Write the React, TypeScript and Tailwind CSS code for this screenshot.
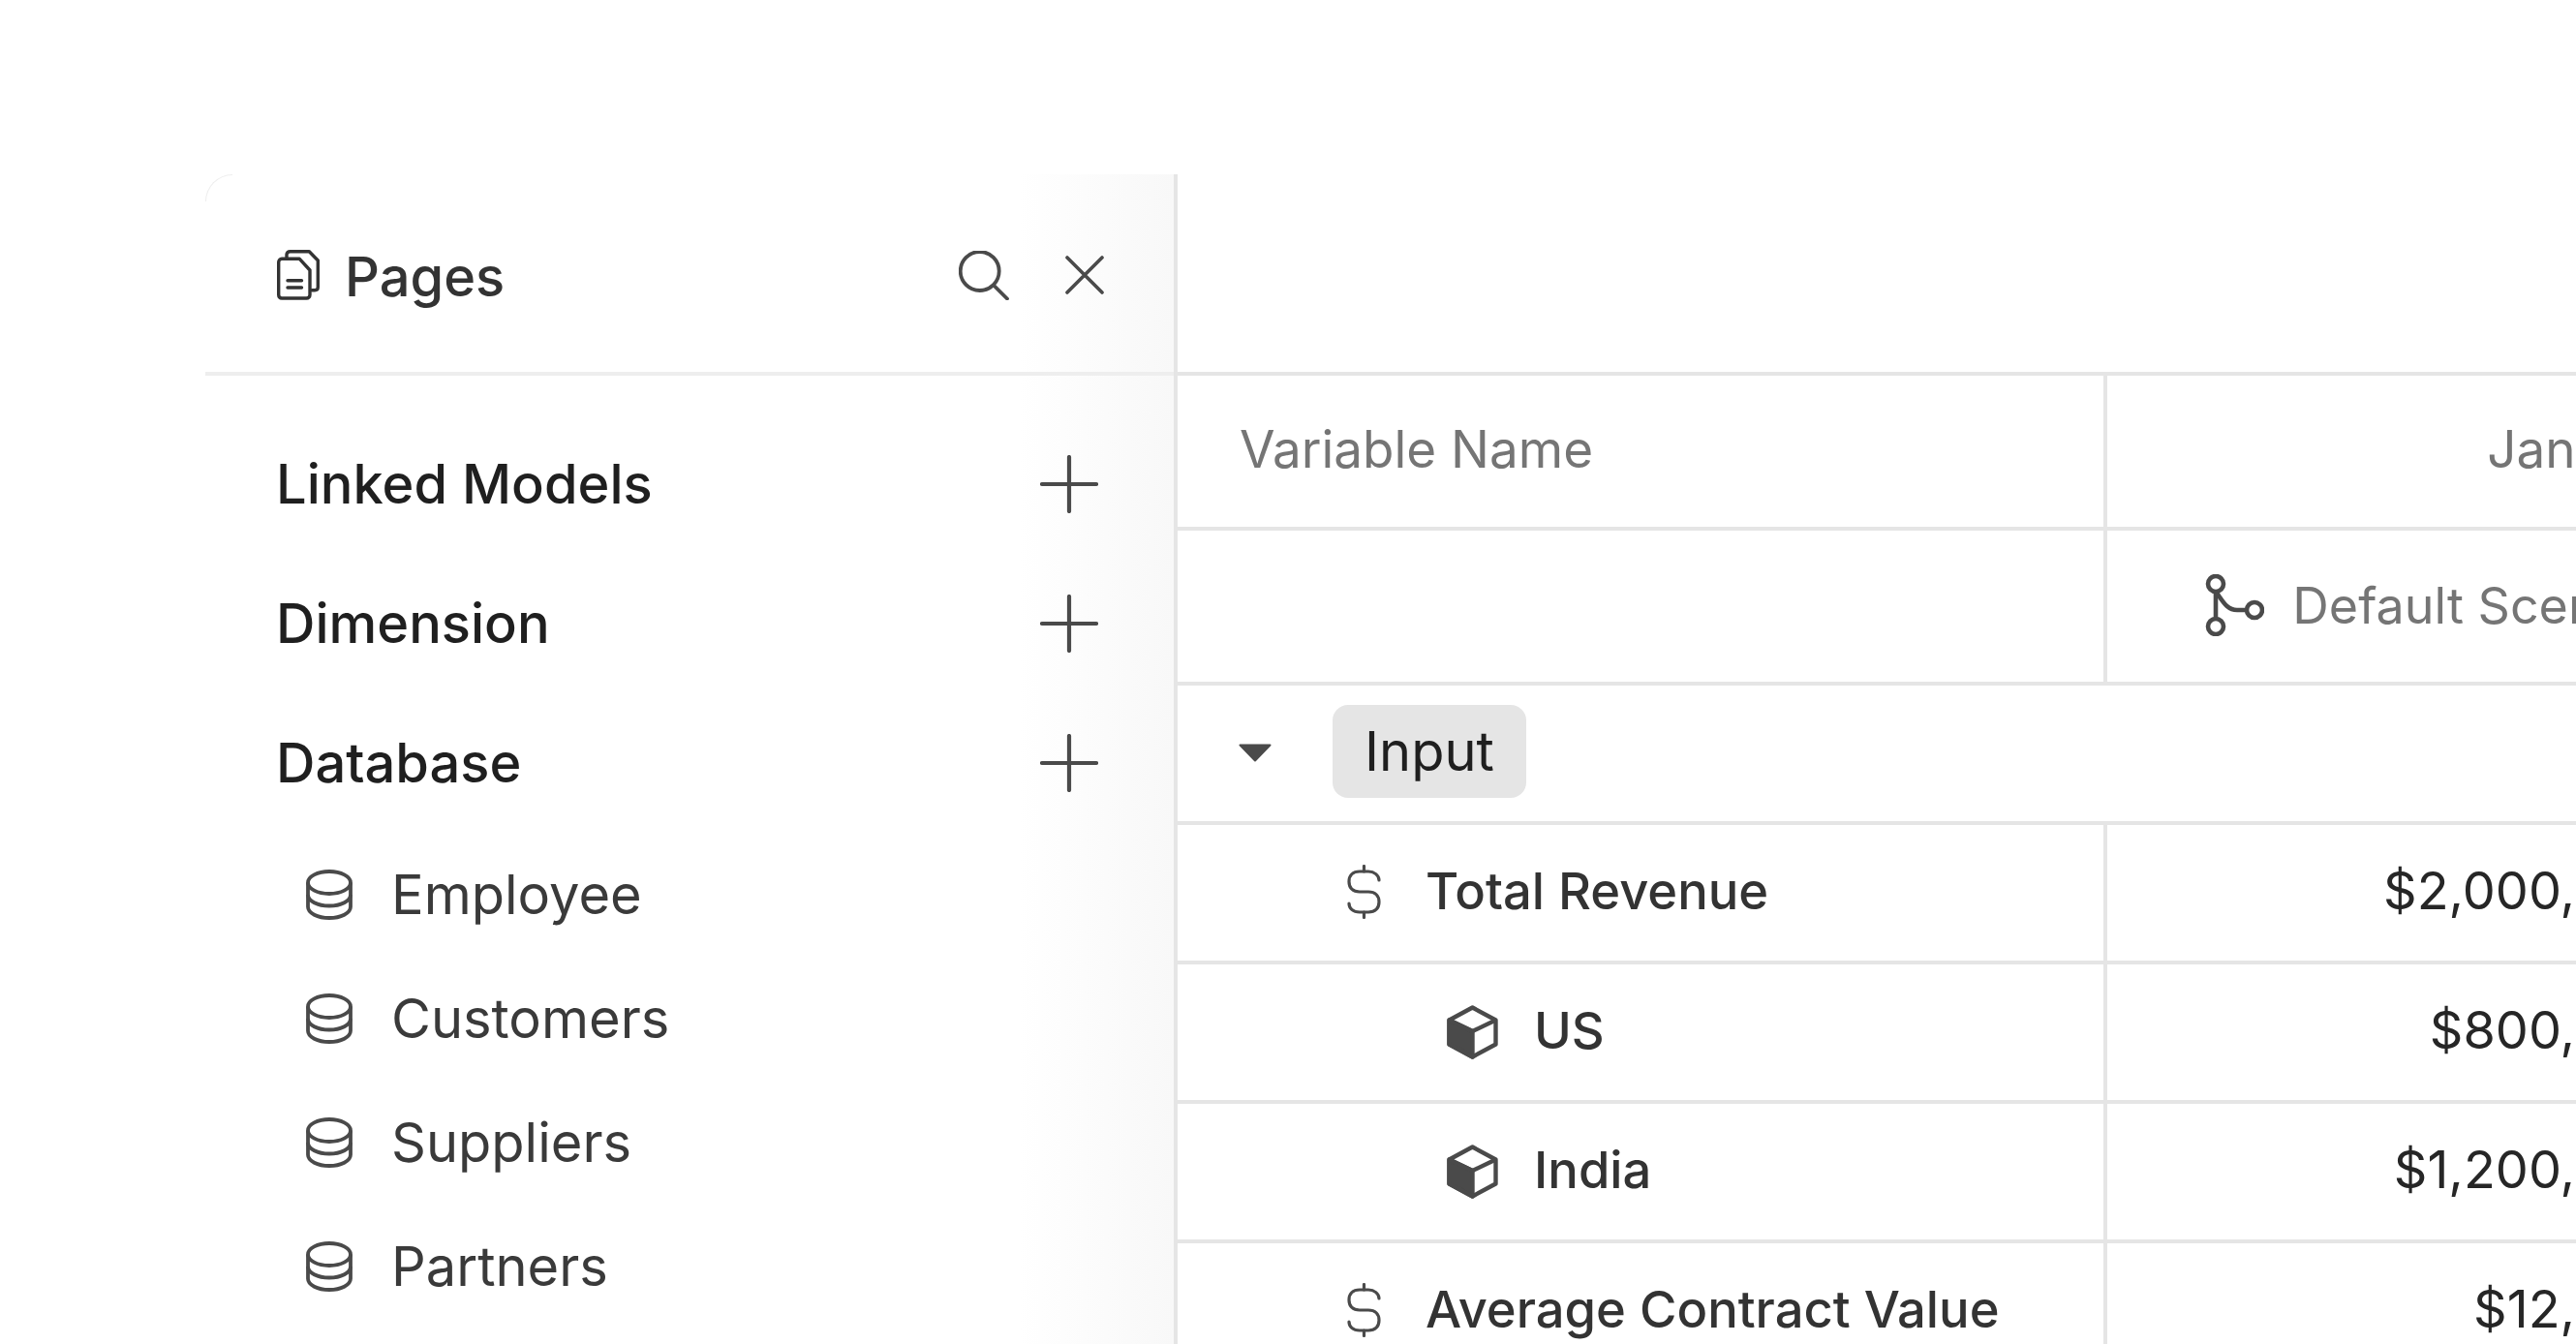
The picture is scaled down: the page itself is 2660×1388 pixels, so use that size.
const ICON = "#4a4a4a";

function PagesIcon() {
  return (
    <svg width="44" height="52" viewBox="0 0 44 52" fill="none" stroke="#333333" strokeWidth="3.4" strokeLinecap="round" strokeLinejoin="round" className="shrink-0">
      <path d="M5 9.3H23.3L34 21V46.5C34 48.5 32.5 50 30.5 50H5C3 50 1.7 48.5 1.7 46.5V12.8C1.7 10.8 3 9.3 5 9.3Z" />
      <path d="M10 8.5V5C10 3 11.5 1.7 13.5 1.7H33.3L42.3 11V38.5C42.3 40.5 41 41.7 39 41.7H36" />
      <path d="M11 31.7H25.5M11 39H25.5" />
    </svg>
  );
}

function SearchIcon() {
  return (
    <svg width="52" height="51" viewBox="0 0 52 51" fill="none" stroke={ICON} strokeWidth="3.8" strokeLinecap="round" className="shrink-0">
      <circle cx="21.7" cy="21" r="20" />
      <path d="M36.5 36L50 49.5" />
    </svg>
  );
}

function CloseIcon() {
  return (
    <svg width="40" height="40" viewBox="0 0 40 40" fill="none" stroke={ICON} strokeWidth="3.6" strokeLinecap="round" className="shrink-0">
      <path d="M2 2L38 38M38 2L2 38" />
    </svg>
  );
}

function PlusIcon() {
  return (
    <svg width="60" height="60" viewBox="0 0 60 60" fill="none" stroke={ICON} strokeWidth="4.2" strokeLinecap="round" className="shrink-0">
      <path d="M30 2V58M2 30H58" />
    </svg>
  );
}

function DatabaseIcon() {
  return (
    <svg width="48" height="52" viewBox="0 0 48 52" fill="none" stroke={ICON} strokeWidth="3.8" className="shrink-0">
      <ellipse cx="24" cy="13.5" rx="22" ry="11.5" />
      <path d="M2 13.5V38.5C2 45 12 50 24 50S46 45 46 38.5V13.5" />
      <path d="M2 26C2 32.5 12 37.5 24 37.5S46 32.5 46 26" />
    </svg>
  );
}

function DollarIcon() {
  return (
    <svg width="39" height="56" viewBox="0 0 39 56" fill="none" stroke={ICON} strokeWidth="3.2" strokeLinecap="round" className="mb-[3px] shrink-0">
      <path d="M19.5 1.5V7M19.5 49V54.5" />
      <path d="M35 16C35 11 30 7 24 7H15C8 7 4 11 4 17.5S8 28 15 28H24C31 28 35 32 35 38.5S31 49 24 49H15C8 49 4 45 4 40" />
    </svg>
  );
}

function CubeIcon() {
  return (
    <svg width="53" height="56" viewBox="0 0 53 56" fill="none" stroke={ICON} strokeWidth="4.4" strokeLinejoin="round" className="shrink-0">
      <path d="M2.5 15.5L26.5 27V53.5L2.5 40.5Z" fill={ICON} />
      <path d="M26.5 2.5L50.5 15.5V40.5L26.5 53.5L2.5 40.5V15.5Z" />
      <path d="M2.5 15.5L26.5 27L50.5 15.5" />
    </svg>
  );
}

function BranchIcon() {
  return (
    <svg width="61" height="64" viewBox="0 0 61 64" fill="none" stroke={ICON} strokeWidth="4.6" className="mb-[3px] shrink-0">
      <circle cx="11" cy="10" r="8" />
      <circle cx="11" cy="54" r="8" />
      <circle cx="51" cy="37" r="8" />
      <path d="M11 18V46" />
      <path d="M11 18C18 27 22 37 33 37H43" />
    </svg>
  );
}

function Caret() {
  return (
    <svg width="34" height="19" viewBox="0 0 34 19" fill={ICON} stroke={ICON} strokeWidth="2" strokeLinejoin="round" className="shrink-0">
      <path d="M1.5 1.5H32.5L17 17.5Z" />
    </svg>
  );
}

function Section({ label }: { label: string }) {
  return (
    <div className="flex h-[144px] items-center justify-between pr-[78px] pl-[73px]">
      <span className="text-[56px] font-medium text-[#1f1f1f]">{label}</span>
      <PlusIcon />
    </div>
  );
}

function Item({ label }: { label: string }) {
  return (
    <div className="flex h-[128px] items-center gap-[40px] pl-[104px]">
      <DatabaseIcon />
      <span className="text-[56px] text-[#3a3a3a]">{label}</span>
    </div>
  );
}

function Row({ name, value, icon, indent, gap }: { name: string; value: string; icon: React.ReactNode; indent: string; gap: string }) {
  return (
    <div className="flex h-[144px] shrink-0 border-b-4 border-[#e5e5e5]">
      <div className={`flex w-[960px] shrink-0 items-center border-r-4 border-[#e5e5e5] ${indent} ${gap}`}>
        {icon}
        <span className="pb-[3px] text-[52.5px] font-medium text-[#333333]">{name}</span>
      </div>
      <div className="flex w-[584px] shrink-0 items-center justify-end pb-[6px] text-[54px] text-[#262626]">{value}</div>
    </div>
  );
}

export default function App() {
  return (
    <div className="flex h-[1388px] w-[2660px] overflow-hidden bg-white pt-[180px] pl-[212px] font-['Inter',sans-serif]">
      <aside className="relative flex h-full w-[1004px] shrink-0 flex-col border-r-4 border-[#e5e5e5] bg-gradient-to-r from-white from-[84%] to-[#f8f8f8]">
        <div className="absolute top-0 left-0 h-[28px] w-[28px] rounded-tl-[28px] border-t border-l border-[#eeeeee]" />
        <div className="flex h-[208px] shrink-0 items-center border-b-4 border-[#eeeeee] pt-[4px] pr-[72px] pl-[74px]">
          <PagesIcon />
          <span className="mt-[4px] ml-[26px] flex-1 text-[56px] font-medium text-[#333333]">Pages</span>
          <SearchIcon />
          <span className="ml-[58px]"><CloseIcon /></span>
        </div>
        <div className="pt-[40px]">
          <Section label="Linked Models" />
          <Section label="Dimension" />
          <Section label="Database" />
          <Item label="Employee" />
          <Item label="Customers" />
          <Item label="Suppliers" />
          <Item label="Partners" />
        </div>
      </aside>
      <main className="flex h-full min-w-0 flex-1 flex-col">
        <div className="h-[208px] shrink-0 border-b-4 border-[#e5e5e5]" />
        <div className="flex h-[160px] shrink-0 border-b-4 border-[#e5e5e5]">
          <div className="flex w-[960px] shrink-0 items-center border-r-4 border-[#e5e5e5] pb-[3px] pl-[64px] text-[53px] text-[#757575]">Variable Name</div>
          <div className="flex w-[630px] shrink-0 items-center justify-end pb-[3px] text-[53px] text-[#757575]">Jan 2024</div>
        </div>
        <div className="flex h-[160px] shrink-0 border-b-4 border-[#e5e5e5]">
          <div className="w-[960px] shrink-0 border-r-4 border-[#e5e5e5]" />
          <div className="flex w-[600px] shrink-0 items-center justify-end gap-[29px] text-[52px] whitespace-nowrap text-[#757575]">
            <BranchIcon />
            <span>Default Scenario</span>
          </div>
        </div>
        <div className="flex h-[144px] shrink-0 items-start border-b-4 border-[#e5e5e5] pt-[20px] pl-[63px]">
          <span className="mt-[40px]"><Caret /></span>
          <span className="ml-[63px] flex h-[96px] w-[200px] items-center justify-center rounded-[16px] bg-[#e5e5e5] text-[56px] text-[#1f1f1f]">Input</span>
        </div>
        <Row name="Total Revenue" value="$2,000,000" icon={<DollarIcon />} indent="pl-[173px]" gap="gap-[44px]" />
        <Row name="US" value="$800,000" icon={<CubeIcon />} indent="pl-[278px]" gap="gap-[37px]" />
        <Row name="India" value="$1,200,000" icon={<CubeIcon />} indent="pl-[278px]" gap="gap-[37px]" />
        <Row name="Average Contract Value" value="$12,000" icon={<DollarIcon />} indent="pl-[173px]" gap="gap-[44px]" />
      </main>
    </div>
  );
}
